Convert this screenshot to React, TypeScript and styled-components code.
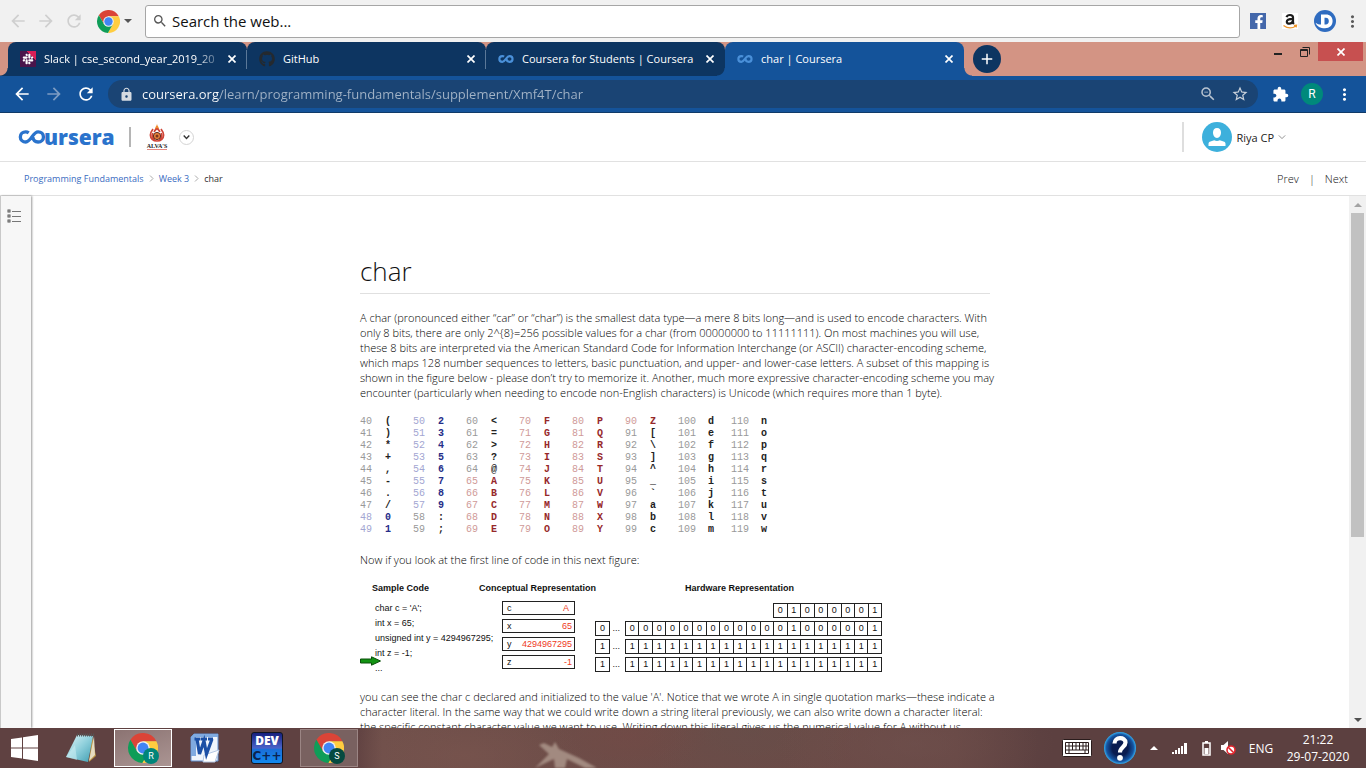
import React from "react";
import styled, { createGlobalStyle, css } from "styled-components";
import {
  MdAdd,
  MdArrowBack,
  MdArrowForward,
  MdExtension,
  MdLock,
  MdMoreVert,
  MdRefresh,
  MdSearch,
  MdStarBorder,
  MdZoomOut,
} from "react-icons/md";
import { FaFacebookF, FaGithub, FaSlack } from "react-icons/fa";

const uiFont = `"Open Sans", "Noto Sans", sans-serif`;
const figureFont = `"Liberation Sans", Arial, sans-serif`;
const blue = "#14539a";
const navy = "#0d3561";
const clay = "#d39484";

const GlobalStyle = createGlobalStyle`
  *, *::before, *::after { box-sizing: border-box; }
  body { margin: 0; background: #fff; font-family: ${uiFont}; }
  button, input { font-family: inherit; }
  button { padding: 0; border: 0; background: none; color: inherit; }
  svg { display: block; flex: none; }
`;

const Screen = styled.div`
  display: flex;
  flex-direction: column;
  height: 100vh;
  overflow: hidden;
`;

/* ---------- search bar ---------- */

const SearchBar = styled.div`
  display: flex;
  align-items: center;
  flex: none;
  height: 42px;
  padding: 0 4px;
  background: #f1f1f1;
  color: #5a5a5a;
`;

const IconButton = styled.button<{ $w: number; $color?: string }>`
  display: flex;
  align-items: center;
  justify-content: center;
  flex: none;
  gap: 4px;
  width: ${(p) => p.$w}px;
  color: ${(p) => p.$color ?? "inherit"};
`;

const SearchField = styled.label`
  display: flex;
  align-items: center;
  flex: 1;
  gap: 4px;
  height: 33px;
  margin: 0 4px;
  padding: 0 6px;
  border: 1px solid #a6a6a6;
  border-radius: 3px;
  background: #fff;
  color: #555;
`;

const SearchInput = styled.input`
  flex: 1;
  min-width: 0;
  padding: 0;
  border: 0;
  outline: 0;
  font-size: 15px;
  &::placeholder {
    color: #111;
    opacity: 1;
  }
`;

const FacebookTile = styled.span`
  display: flex;
  align-items: flex-end;
  justify-content: flex-end;
  width: 16px;
  height: 16px;
  background: #4468ab;
  color: #fff;
`;

const AmazonTile = styled.span`
  display: block;
  background: #fff;
`;

/* ---------- browser tabs ---------- */

const TabStrip = styled.div`
  display: flex;
  flex: none;
  height: 34px;
  padding-left: 8px;
  background: ${clay};
`;

const Tab = styled.div<{ $active?: boolean; $divided?: boolean }>`
  position: relative;
  display: flex;
  align-items: center;
  flex: 0 1 239px;
  min-width: 0;
  padding: 0 7px 0 12px;
  border-radius: 8px 8px 0 0;
  background: ${(p) => (p.$active ? blue : navy)};
  color: #fff;
  ${(p) =>
    p.$divided &&
    css`
      &::after {
        content: "";
        position: absolute;
        right: 0;
        top: 8px;
        width: 1px;
        height: 19px;
        background: #5b7898;
      }
    `}
  ${(p) =>
    p.$active &&
    css`
      &::before,
      &::after {
        content: "";
        position: absolute;
        bottom: 0;
        width: 8px;
        height: 8px;
      }
      &::before {
        left: -8px;
        background: radial-gradient(circle at 0 0, ${navy} 7px, ${blue} 8px);
      }
      &::after {
        right: -8px;
        background: radial-gradient(circle at 100% 0, ${clay} 7px, ${blue} 8px);
      }
    `}
`;

const FirstTab = styled(Tab)`
  &::before {
    content: "";
    position: absolute;
    left: -8px;
    bottom: 0;
    width: 8px;
    height: 8px;
    background: radial-gradient(circle at 0 0, ${clay} 7px, ${navy} 8px);
  }
`;

const TabLink = styled.a`
  display: flex;
  align-items: center;
  flex: 1;
  gap: 8px;
  min-width: 0;
  color: inherit;
  text-decoration: none;
`;

const TabTitle = styled.span<{ $fade?: boolean }>`
  flex: 1;
  font-size: 11px;
  line-height: 16px;
  white-space: nowrap;
  ${(p) =>
    p.$fade &&
    css`
      mask-image: linear-gradient(90deg, #000 calc(100% - 28px), transparent);
    `}
`;

const SlackTile = styled.span`
  display: flex;
  align-items: center;
  justify-content: center;
  width: 16px;
  height: 16px;
  background: linear-gradient(225deg, #d91f57 30%, #4a154b 31%);
  color: #fff;
`;

const NewTab = styled.button`
  display: flex;
  align-items: center;
  justify-content: center;
  flex: none;
  align-self: center;
  width: 28px;
  height: 28px;
  margin-left: 9px;
  border-radius: 50%;
  background: ${navy};
  color: #fff;
`;

const WindowControls = styled.div`
  display: flex;
  align-items: flex-start;
  margin-left: auto;
  padding-right: 3px;
`;

const WindowButton = styled.button<{ $close?: boolean }>`
  display: flex;
  align-items: center;
  justify-content: center;
  width: ${(p) => (p.$close ? 45 : 27)}px;
  height: 19px;
  background: ${(p) => (p.$close ? "#c75050" : "transparent")};
  color: ${(p) => (p.$close ? "#fff" : "#222")};
`;

/* ---------- address bar ---------- */

const AddressBar = styled.div`
  display: flex;
  align-items: center;
  flex: none;
  height: 37px;
  padding: 0 6px;
  border-bottom: 1px solid #103a68;
  background: ${blue};
  color: #fff;
`;

const Omnibox = styled.div`
  display: flex;
  align-items: center;
  flex: 1;
  height: 28px;
  margin: 0 6px;
  padding: 0 2px 0 11px;
  border-radius: 14px;
  background: #1a4474;
  color: #d5dbe2;
`;

const UrlInput = styled.input`
  flex: 1;
  min-width: 0;
  margin-left: 8px;
  padding: 0;
  border: 0;
  outline: 0;
  font-size: 13px;
  background: linear-gradient(90deg, #fff 77px, #a3b4c7 77px);
  background-clip: text;
  -webkit-background-clip: text;
  color: transparent;
`;

const ProfileBadge = styled.span`
  display: flex;
  align-items: center;
  justify-content: center;
  width: 22px;
  height: 22px;
  border-radius: 50%;
  background: #00897b;
  color: #fff;
  font: 12px Roboto, sans-serif;
`;

/* ---------- course site ---------- */

const SiteHeader = styled.header`
  display: flex;
  align-items: center;
  justify-content: space-between;
  flex: none;
  height: 49px;
  padding: 0 80px 0 18px;
  border-bottom: 1px solid #e1e1e1;
`;

const HeaderGroup = styled.div`
  display: flex;
  align-items: center;
`;

const BrandLink = styled.a`
  display: flex;
  align-items: center;
  width: 96px;
  margin-right: 15px;
  color: #2a73cc;
  text-decoration: none;
`;

const BrandName = styled.span`
  margin-left: -2px;
  font: 800 21px/24px "Open Sans", sans-serif;
`;

const HeaderRule = styled.span<{ $h: number; $color: string }>`
  width: 2px;
  height: ${(p) => p.$h}px;
  background: ${(p) => p.$color};
`;

const SchoolLink = styled.a`
  display: flex;
  flex-direction: column;
  align-items: center;
  width: 22px;
  margin: 0 11px 0 15px;
  color: #222;
  text-decoration: none;
`;

const SchoolName = styled.span`
  border-bottom: 1px solid #e58a82;
  font: bold 6px/6px "Liberation Serif", serif;
`;

const RoundButton = styled.button`
  display: flex;
  align-items: center;
  justify-content: center;
  width: 15px;
  height: 15px;
  border: 1px solid #d4d4d4;
  border-radius: 50%;
  color: #333;
`;

const UserButton = styled.button`
  display: flex;
  align-items: center;
  gap: 4px;
  margin-left: 18px;
  color: #222;
  font-size: 11px;
`;

const CrumbBar = styled.div`
  display: flex;
  align-items: center;
  justify-content: space-between;
  flex: none;
  height: 34px;
  padding: 0 18px 0 24px;
  border-bottom: 1px solid #e1e1e1;
  color: #333;
  font-size: 9px;
`;

const Crumbs = styled.nav`
  display: flex;
  align-items: center;
  gap: 5px;
`;

const CrumbLink = styled.a`
  color: #3a6cbf;
  text-decoration: none;
`;

const Pager = styled.nav`
  display: flex;
  gap: 10px;
  font-size: 11px;
  font-weight: 300;
`;

const PagerLink = styled.a`
  color: #111;
  text-decoration: none;
`;

const Workspace = styled.div`
  display: flex;
  flex: 1;
  min-height: 0;
`;

const SideRail = styled.aside`
  flex: none;
  width: 31px;
  padding: 13px 0 0 6px;
  border-left: 1px solid #c9c9c9;
  background: #f7f7f7;
  box-shadow: 1px 0 2px rgba(0, 0, 0, 0.4);
`;

const Reader = styled.main`
  flex: 1;
  min-width: 0;
  overflow: hidden;
  padding: 58px 30px 0 0;
`;

const Article = styled.article`
  width: 100%;
  max-width: 630px;
  margin: 0 auto;
`;

const Title = styled.h1`
  margin: 0 0 16px;
  padding-bottom: 5px;
  border-bottom: 1px solid #e0e0e0;
  color: #111;
  font-size: 26px;
  font-weight: 300;
  line-height: 34px;
`;

const Paragraph = styled.p`
  margin: 0;
  color: #000;
  font-size: 11px;
  font-weight: 300;
  line-height: 15px;
  white-space: nowrap;
`;

const AsciiTable = styled.table`
  margin: 16px 0;
  table-layout: fixed;
  border-collapse: collapse;
  width: 424px;
  font: 10px/12px "Liberation Mono", monospace;
`;

const tones = {
  plain: ["#999", "#222"],
  digit: ["#a3a6d2", "#252d88"],
  upper: ["#cf9a98", "#96282a"],
};

type Tone = keyof typeof tones;

const Code = styled.td<{ $tone: Tone }>`
  padding: 0;
  height: 12px;
  color: ${(p) => tones[p.$tone][0]};
`;

const Glyph = styled.td<{ $tone: Tone }>`
  padding: 0 0 0 1px;
  height: 12px;
  color: ${(p) => tones[p.$tone][1]};
  font-weight: bold;
`;

/* ---------- memory figure ---------- */

const Figure = styled.figure`
  margin: 14px 0 13px;
  color: #111;
  font: 9px/14px ${figureFont};
`;

const FigureHeads = styled.div`
  display: grid;
  grid-template-columns: 107px 206px auto;
  padding-left: 12px;
  font-weight: bold;
`;

const FigureBody = styled.div`
  display: flex;
  align-items: flex-start;
  margin-top: 6px;
`;

const SampleCode = styled.div`
  position: relative;
  width: 142px;
  padding-left: 15px;
  line-height: 15px;
  white-space: nowrap;
`;

const GreenArrow = styled.svg`
  position: absolute;
  left: 0;
  bottom: 10px;
`;

const VariableList = styled.div`
  display: flex;
  flex-direction: column;
  gap: 4px;
  width: 73px;
`;

const Variable = styled.div`
  display: flex;
  align-items: center;
  justify-content: space-between;
  height: 14px;
  padding: 0 1px 0 4px;
  border: 1px solid #222;
`;

const Value = styled.span<{ $inset?: boolean }>`
  padding-right: ${(p) => (p.$inset ? 4 : 1)}px;
  color: #ee3a24;
`;

const BitRows = styled.div`
  display: flex;
  flex-direction: column;
  gap: 3px;
  width: 287px;
  margin-left: 20px;
  padding-top: 2px;
`;

const BitRow = styled.div`
  display: flex;
  justify-content: space-between;
  height: 15px;
`;

const Bits = styled.div<{ $w: number }>`
  display: flex;
  width: ${(p) => p.$w}px;
  margin-left: auto;
  border: 1px solid #222;
  & > span {
    flex: 1;
    line-height: 13px;
    text-align: center;
  }
  & > span + span {
    border-left: 1px solid #222;
  }
`;

const LeadBit = styled.span`
  width: 15px;
  border: 1px solid #222;
  line-height: 13px;
  text-align: center;
`;

const Ellipsis = styled.span`
  margin: 0 auto;
`;

/* ---------- scroll bar ---------- */

const ScrollBar = styled.div`
  display: flex;
  flex-direction: column;
  align-items: center;
  flex: none;
  width: 17px;
  background: #f1f1f1;
`;

const ScrollEnd = styled.button`
  display: flex;
  align-items: center;
  justify-content: center;
  width: 17px;
  height: 17px;
`;

const ScrollTrack = styled.div`
  flex: 1;
  height: 0;
`;

const ScrollThumb = styled.div`
  width: 13px;
  height: 65%;
  background: #c1c1c1;
`;

/* ---------- task bar ---------- */

const TaskBar = styled.footer`
  position: relative;
  display: flex;
  align-items: center;
  flex: none;
  height: 40px;
  padding-right: 15px;
  background: radial-gradient(ellipse 80px 40px at 46% 20%, #74494580, transparent),
    radial-gradient(ellipse 120px 50px at 34% 70%, #7d575080, transparent),
    radial-gradient(ellipse 140px 60px at 67% 40%, #71535080, transparent),
    radial-gradient(ellipse 110px 60px at 55% 10%, #64504b80, transparent),
    linear-gradient(90deg, #5f4141 0, #5f4141 26%, #70504b 28%, #6e4e49 34%, #6b4a46 60%, #674744 70%, #5c4040 76%, #5c4040 100%);
  color: #fff;
`;

const Starfish = styled.svg`
  position: absolute;
  left: 39%;
  bottom: 0;
  filter: blur(1px);
`;

const TaskList = styled.div`
  display: flex;
  align-items: center;
  gap: 4px;
  flex: 1;
`;

const StartButton = styled.button`
  display: flex;
  justify-content: flex-end;
  width: 48px;
  padding-right: 10px;
`;

const TaskButton = styled.button<{ $state?: "front" | "open" }>`
  position: relative;
  display: flex;
  align-items: center;
  justify-content: center;
  width: 58px;
  height: 38px;
  border: 1px solid
    ${(p) => (p.$state === "front" ? "#fff" : p.$state === "open" ? "#9b8584" : "transparent")};
  background: ${(p) =>
    p.$state === "front"
      ? "linear-gradient(160deg, #8b7372, #ab9593)"
      : p.$state === "open"
        ? "#796160"
        : "transparent"};
`;

const Initial = styled.span<{ $color: string }>`
  position: absolute;
  right: 12px;
  bottom: 2px;
  width: 16px;
  height: 16px;
  border-radius: 50%;
  background: ${(p) => p.$color};
  font: 9px/16px Roboto, sans-serif;
  text-align: center;
`;

const DevTile = styled.span`
  display: flex;
  flex-direction: column;
  align-items: center;
  width: 32px;
  height: 32px;
  border: 1px solid #101522;
  border-radius: 3px;
  background: linear-gradient(#16207e 0, #4a63c9 50%, #1a6fd8 55%, #1289ef);
`;

const DevName = styled.span`
  font: 800 12px/16px "Open Sans", sans-serif;
`;

const DevCpp = styled.span`
  color: #0b2350;
  font: bold 12px/14px "DejaVu Sans", sans-serif;
`;

const TrayText = styled.button<{ $w: number }>`
  width: ${(p) => p.$w}px;
  font-size: 12px;
  line-height: 17px;
  text-align: center;
  white-space: nowrap;
`;

/* ---------- drawings ---------- */

const ChromeLogo = ({ size }: { size: number }) => (
  <svg width={size} height={size} viewBox="2 2 44 44">
    <path fill="#db4437" d="M43.6 14H24L15.34 29 5.54 12.03A22 22 0 0 1 43.6 14Z" />
    <path fill="#ffcd40" d="M43.6 14A22 22 0 0 1 22.86 45.97L32.66 29 24 14Z" />
    <path fill="#0f9d58" d="M22.86 45.97A22 22 0 0 1 5.54 12.03L15.34 29H32.66Z" />
    <circle cx="24" cy="24" r="10" fill="#f1f1f1" />
    <circle cx="24" cy="24" r="8" fill="#4285f4" />
  </svg>
);

const CourseraMark = ({ width, color, weight }: { width: number; color: string; weight: number }) => (
  <svg width={width} height={Math.round(width / 2)} viewBox="0 0 29 15" fill="none" stroke={color} strokeWidth={weight}>
    <path d="M11 3C10 2.300 9 2 7.800 2 4.600 2 2 4.400 2 7.400s2.600 5.400 5.800 5.400C13.400 12.800 15.400 2 21 2c3.300 0 5.800 2.400 5.800 5.400s-2.500 5.400-5.800 5.400c-3.300 0-5.200-2.200-5.600-5" />
  </svg>
);

const AlvaEmblem = () => (
  <svg width="18" height="19" viewBox="0 0 18 19">
    <path d="M9 0c-.4 2.200-2 3-2 5h4c0-2-1.600-2.800-2-5z" fill="#f08a2c" />
    <path
      d="M9 4.500c-1 1-2.500 1.500-2.700 3.500M9 4.500c1 1 2.500 1.500 2.700 3.500M5 5C3.500 7 2.300 8.500 2.400 11c0 3.500 2.600 6 6.600 6s6.600-2.500 6.600-6c.1-2.500-1.100-4-2.600-6M4.800 9c-1 3 .2 5.500 2.200 6.500M13.200 9c1 3-.2 5.500-2.200 6.500"
      fill="none"
      stroke="#cf4436"
      strokeWidth="1.700"
    />
    <circle cx="9" cy="12" r="3.600" fill="#e8823a" stroke="#5b2a20" />
    <circle cx="9" cy="12" r="1.500" fill="#7a3420" />
  </svg>
);

const DownChevron = ({ w, color, weight }: { w: number; color: string; weight: number }) => (
  <svg width={w} height="6" viewBox="0 0 10 6" fill="none" stroke={color} strokeWidth={weight}>
    <path d="M1 1l4 4 4-4" />
  </svg>
);

const Crumb = () => (
  <svg width="5" height="7" viewBox="0 0 5 7" fill="none" stroke="#aaa">
    <path d="M1 .5l3 3-3 3" />
  </svg>
);

const Avatar = () => (
  <svg width="30" height="30" viewBox="0 0 30 30">
    <circle cx="15" cy="15" r="15" fill="#3db0dc" />
    <path d="M15 6c2.600 0 4 2 4 4.600 0 2.800-1.600 5.400-4 5.400s-4-2.600-4-5.400C11 8 12.400 6 15 6zM6.500 24v-2.200c0-1.200.8-1.900 2-2.300l3.700-1.200c1.800.9 3.800.9 5.600 0l3.700 1.200c1.200.4 2 1.100 2 2.300V24z" fill="#fff" />
  </svg>
);

const OutlineIcon = () => (
  <svg width="14" height="14" viewBox="0 0 14 14" fill="none" stroke="#555">
    {[2, 7, 12].map((y) => (
      <g key={y}>
        <rect x="1" y={y - 1} width="2" height="2" />
        <path d={`M5 ${y}.5h9`} stroke="#777" />
      </g>
    ))}
  </svg>
);

const Triangle = ({ up, color }: { up?: boolean; color: string }) => (
  <svg width="8" height="4" viewBox="0 0 8 4">
    <path d={up ? "M0 4l4-4 4 4z" : "M0 0h8L4 4z"} fill={color} />
  </svg>
);

const Cross = () => (
  <svg width="8" height="8" viewBox="0 0 8 8" stroke="currentColor" strokeWidth="1.700">
    <path d="M.5 .5l7 7M7.500 .5l-7 7" />
  </svg>
);

const AmazonMark = () => (
  <svg width="16" height="16" viewBox="0 0 16 16" fill="none">
    <path
      d="M4.500 4.200C5 2.600 6.300 2 8 2c2 0 3 .8 3 2.600V9c0 .8.200 1.300.9 2M11 5.800C7 5.800 4.800 6.500 4.800 8.700c0 2.800 4.800 2.800 6.200-.7"
      stroke="#1c1c1c"
      strokeWidth="2.200"
    />
    <path d="M1.500 12.500c4 3 9 2.800 12.500.5M12 12.500l2.500-.2-.4 2" stroke="#f0962a" strokeWidth="1.300" />
  </svg>
);

const DBadge = () => (
  <svg width="22" height="22" viewBox="0 0 22 22">
    <circle cx="11" cy="11" r="11" fill="#2f6cc0" />
    <path
      d="M7 4.500h5c4 0 6.600 2.600 6.600 6.600 0 4.400-3 7.200-7.600 7.200-4.600 0-8.200-2-9.400-5.600C3 14 5 14.600 7 14.600z"
      fill="#fff"
    />
    <path d="M10.500 7.800h1.300c1.900 0 3 1.200 3 3.300s-1.100 3.500-3 3.500h-1.300z" fill="#2f6cc0" />
  </svg>
);

const WindowsLogo = () => (
  <svg width="27" height="26" viewBox="0 0 27 26" fill="#fff">
    <path d="M0 4l11-1.600V12.400H0zM12 2.200L27 0v12.400H12zM0 13.400h11v10L0 21.900zM12 13.400h15V26l-15-2.300z" />
  </svg>
);

const NotepadIcon = () => (
  <svg width="32" height="30" viewBox="0 0 32 30">
    <defs>
      <linearGradient id="note" x1="0" y1="0" x2="1" y2="1">
        <stop offset="0" stopColor="#e2f5f8" />
        <stop offset=".5" stopColor="#8fd0dc" />
        <stop offset="1" stopColor="#3f9db1" />
      </linearGradient>
    </defs>
    <path d="M27 3l4 20-7 6z" fill="#b7913f" />
    <path d="M29 3l1 19-6 6z" fill="#e6dcc0" />
    <path d="M12 2l16 1-5 26L1 24z" fill="url(#note)" />
    <path d="M1 24l9-12 2 15z" fill="#d4f1f5" opacity=".5" />
    <path d="M12 2h17" stroke="#555" strokeWidth="3" strokeDasharray="1 1" />
  </svg>
);

const WordIcon = () => (
  <svg width="30" height="30" viewBox="0 0 30 30">
    <path d="M4 1h24v27H1V4z" fill="#eef4fb" stroke="#5f8fd0" />
    <path d="M1 4l3-3h24v3H6v19H1z" fill="#7faae0" />
    <path d="M14 22l15-5-4 12H13z" fill="#fff" stroke="#b5c8e4" />
    <path d="M4.500 6h6M11 6h6M18 6h5M7 6l2.500 15L14 8l2.500 13L22 6" fill="none" stroke="#1b4fa5" strokeWidth="3.200" />
  </svg>
);

const KeyboardIcon = () => (
  <svg width="30" height="18" viewBox="0 0 30 18">
    <rect x=".5" y=".5" width="29" height="17" rx="1" fill="#fff" stroke="#2a1c1c" />
    <path
      d="M3.500 3.500h23v11h-23zM3.500 7h23M3.500 11h23M7 3.500v7.500M10.500 3.500V11M14 3.500V11M17.500 3.500V11M21 3.500V11M24 3.500V11M7 11v3.500M23 11v3.500"
      fill="none"
      stroke="#2a1c1c"
    />
  </svg>
);

const HelpIcon = () => (
  <svg width="32" height="32" viewBox="0 0 32 32">
    <defs>
      <radialGradient id="help" cx=".5" cy=".5" r=".5">
        <stop offset=".5" stopColor="#0a1c50" />
        <stop offset=".85" stopColor="#1556a4" />
        <stop offset="1" stopColor="#35aef0" />
      </radialGradient>
    </defs>
    <circle cx="16" cy="16" r="16" fill="url(#help)" />
    <path d="M10.500 11.500c0-7 11-6.800 11-1 0 4.500-5.500 4.500-5.500 10" fill="none" stroke="#fff" strokeWidth="4.200" />
    <circle cx="16" cy="25.800" r="2.900" fill="#fff" />
  </svg>
);

const SignalIcon = () => (
  <svg width="16" height="12" viewBox="0 0 16 12" fill="#fff">
    <path d="M0 10h2v2H0zM3 8h2v4H3zM6 6h2v6H6zM9 4h2v8H9zM12 1h3v11h-3z" />
  </svg>
);

const BatteryIcon = () => (
  <svg width="9" height="15" viewBox="0 0 9 15">
    <path d="M3 0h3v2H3z" fill="#fff" />
    <rect x="1" y="2" width="7" height="12" fill="none" stroke="#fff" strokeWidth="1.500" />
    <path d="M2.500 7h4v6h-4z" fill="#fff" />
  </svg>
);

const MutedIcon = () => (
  <svg width="15" height="14" viewBox="0 0 15 14">
    <path d="M0 4h2.500L7 0v13L2.500 9H0z" fill="#fff" />
    <circle cx="10" cy="9" r="4" fill="#fff" stroke="#e0242c" strokeWidth="1.600" />
    <path d="M7.200 6.200l5.600 5.600" stroke="#e0242c" strokeWidth="1.600" />
  </svg>
);

/* ---------- data ---------- */

const toneOf = (code: number): Tone =>
  code >= 48 && code <= 57 ? "digit" : code >= 65 && code <= 90 ? "upper" : "plain";

const columns = [40, 50, 60, 70, 80, 90, 100, 110];
const rows = Array.from({ length: 10 }, (_, i) => i);

const sampleLines = ["char c = 'A';", "int x = 65;", "unsigned int y = 4294967295;", "int z = -1;", "..."];

const variables = [
  { name: "c", value: "A", inset: true },
  { name: "x", value: "65", inset: false },
  { name: "y", value: "4294967295", inset: false },
  { name: "z", value: "-1", inset: false },
];

const wideWords = ["0000000000001000001", "1111111111111111111", "1111111111111111111"];

const BitCells = ({ word, width }: { word: string; width: number }) => (
  <Bits $w={width}>
    {word.split("").map((bit, i) => (
      <span key={i}>{bit}</span>
    ))}
  </Bits>
);

const CloseTab = () => (
  <IconButton $w={16} aria-label="Close tab">
    <Cross />
  </IconButton>
);

export default function App() {
  return (
    <Screen>
      <GlobalStyle />

      <SearchBar>
        <IconButton $w={28} $color="#cfcfcf" aria-label="Back"><MdArrowBack size={20} /></IconButton>
        <IconButton $w={28} $color="#cfcfcf" aria-label="Forward"><MdArrowForward size={20} /></IconButton>
        <IconButton $w={28} $color="#cfcfcf" aria-label="Reload"><MdRefresh size={20} /></IconButton>
        <IconButton $w={53} aria-label="Search engine">
          <ChromeLogo size={23} />
          <Triangle color="#555" />
        </IconButton>
        <SearchField>
          <MdSearch size={16} />
          <SearchInput aria-label="Search the web" placeholder="Search the web..." />
        </SearchField>
        <IconButton $w={28} aria-label="Facebook">
          <FacebookTile><FaFacebookF size={14} /></FacebookTile>
        </IconButton>
        <IconButton $w={36} aria-label="Amazon">
          <AmazonTile><AmazonMark /></AmazonTile>
        </IconButton>
        <IconButton $w={34} aria-label="Account"><DBadge /></IconButton>
        <IconButton $w={20} aria-label="Menu"><MdMoreVert size={19} /></IconButton>
      </SearchBar>

      <TabStrip>
        <FirstTab $divided>
          <TabLink href="#slack">
            <SlackTile><FaSlack size={12} /></SlackTile>
            <TabTitle $fade>Slack | cse_second_year_2019_20</TabTitle>
          </TabLink>
          <CloseTab />
        </FirstTab>
        <Tab $divided>
          <TabLink href="#github">
            <FaGithub size={16} color="#24292e" />
            <TabTitle>GitHub</TabTitle>
          </TabLink>
          <CloseTab />
        </Tab>
        <Tab>
          <TabLink href="#students">
            <CourseraMark width={16} color="#4a90d9" weight={4} />
            <TabTitle>Coursera for Students | Coursera</TabTitle>
          </TabLink>
          <CloseTab />
        </Tab>
        <Tab $active>
          <TabLink href="#char">
            <CourseraMark width={16} color="#4a90d9" weight={4} />
            <TabTitle>char | Coursera</TabTitle>
          </TabLink>
          <CloseTab />
        </Tab>
        <NewTab aria-label="New tab"><MdAdd size={18} /></NewTab>
        <WindowControls>
          <WindowButton aria-label="Minimize">
            <svg width="8" height="8" viewBox="0 0 8 8"><path d="M0 5h8v2H0z" fill="currentColor" /></svg>
          </WindowButton>
          <WindowButton aria-label="Restore">
            <svg width="10" height="10" viewBox="0 0 10 10" fill="none" stroke="currentColor">
              <path d="M.5 2.500h7v7h-7zM.5 3.500h7M2.500 .5h7v7" />
            </svg>
          </WindowButton>
          <WindowButton $close aria-label="Close window"><Cross /></WindowButton>
        </WindowControls>
      </TabStrip>

      <AddressBar>
        <IconButton $w={32} aria-label="Back"><MdArrowBack size={20} /></IconButton>
        <IconButton $w={32} $color="#7d9cc3" aria-label="Forward"><MdArrowForward size={20} /></IconButton>
        <IconButton $w={32} aria-label="Reload"><MdRefresh size={20} /></IconButton>
        <Omnibox>
          <MdLock size={15} />
          <UrlInput
            aria-label="Address"
            defaultValue="coursera.org/learn/programming-fundamentals/supplement/Xmf4T/char"
          />
          <IconButton $w={32} $color="#b9c4d1" aria-label="Zoom"><MdZoomOut size={18} /></IconButton>
          <IconButton $w={32} $color="#c9d1da" aria-label="Bookmark"><MdStarBorder size={18} /></IconButton>
        </Omnibox>
        <IconButton $w={32} aria-label="Extensions"><MdExtension size={17} /></IconButton>
        <IconButton $w={32} aria-label="Profile"><ProfileBadge>R</ProfileBadge></IconButton>
        <IconButton $w={32} aria-label="Browser menu"><MdMoreVert size={19} /></IconButton>
      </AddressBar>

      <SiteHeader>
        <HeaderGroup>
          <BrandLink href="#home" aria-label="coursera">
            <CourseraMark width={28} color="#2a73cc" weight={3.6} />
            <BrandName>ursera</BrandName>
          </BrandLink>
          <HeaderRule $h={20} $color="#b5b5b5" />
          <SchoolLink href="#school">
            <AlvaEmblem />
            <SchoolName>ALVA'S</SchoolName>
          </SchoolLink>
          <RoundButton aria-label="Switch program"><DownChevron w={7} color="#333" weight={2} /></RoundButton>
        </HeaderGroup>
        <HeaderGroup>
          <HeaderRule $h={30} $color="#dedede" />
          <UserButton>
            <Avatar />
            Riya CP
            <DownChevron w={8} color="#777" weight={1} />
          </UserButton>
        </HeaderGroup>
      </SiteHeader>

      <CrumbBar>
        <Crumbs aria-label="Breadcrumb">
          <CrumbLink href="#course">Programming Fundamentals</CrumbLink>
          <Crumb />
          <CrumbLink href="#week3">Week 3</CrumbLink>
          <Crumb />
          <span>char</span>
        </Crumbs>
        <Pager aria-label="Lessons">
          <PagerLink href="#prev">Prev</PagerLink>
          <span>|</span>
          <PagerLink href="#next">Next</PagerLink>
        </Pager>
      </CrumbBar>

      <Workspace>
        <SideRail>
          <IconButton $w={14} aria-label="Course outline"><OutlineIcon /></IconButton>
        </SideRail>
        <Reader>
          <Article>
            <Title>char</Title>
            <Paragraph>
              A char (pronounced either “car” or “char”) is the smallest data type—a mere 8 bits long—and is used to encode characters. With<br />
              only 8 bits, there are only 2^{"{8}"}=256 possible values for a char (from 00000000 to 11111111). On most machines you will use,<br />
              these 8 bits are interpreted via the American Standard Code for Information Interchange (or ASCII) character-encoding scheme,<br />
              which maps 128 number sequences to letters, basic punctuation, and upper- and lower-case letters. A subset of this mapping is<br />
              shown in the figure below - please don’t try to memorize it. Another, much more expressive character-encoding scheme you may<br />
              encounter (particularly when needing to encode non-English characters) is Unicode (which requires more than 1 byte).
            </Paragraph>
            <AsciiTable aria-label="ASCII codes 40 to 119">
              <colgroup>
                {columns.map((c) => (
                  <React.Fragment key={c}>
                    <col width={c < 100 ? 24 : 29} />
                    <col width={c < 100 ? 29 : 24} />
                  </React.Fragment>
                ))}
              </colgroup>
              <tbody>
                {rows.map((r) => (
                  <tr key={r}>
                    {columns.map((c) => (
                      <React.Fragment key={c}>
                        <Code $tone={toneOf(c + r)}>{c + r}</Code>
                        <Glyph $tone={toneOf(c + r)}>{String.fromCharCode(c + r)}</Glyph>
                      </React.Fragment>
                    ))}
                  </tr>
                ))}
              </tbody>
            </AsciiTable>
            <Paragraph>Now if you look at the first line of code in this next figure:</Paragraph>
            <Figure>
              <FigureHeads>
                <span>Sample Code</span>
                <span>Conceptual Representation</span>
                <span>Hardware Representation</span>
              </FigureHeads>
              <FigureBody>
                <SampleCode>
                  {sampleLines.map((line) => (
                    <div key={line}>{line}</div>
                  ))}
                  <GreenArrow width="21" height="10" viewBox="0 0 21 10">
                    <path d="M.5 3h11V.8L20.500 5l-9 4.200V7H.5z" fill="#129312" stroke="#0b4f0b" />
                  </GreenArrow>
                </SampleCode>
                <VariableList>
                  {variables.map((v) => (
                    <Variable key={v.name}>
                      <span>{v.name}</span>
                      <Value $inset={v.inset}>{v.value}</Value>
                    </Variable>
                  ))}
                </VariableList>
                <BitRows>
                  <BitRow><BitCells word="01000001" width={109} /></BitRow>
                  {wideWords.map((word, i) => (
                    <BitRow key={i}>
                      <LeadBit>{word[0]}</LeadBit>
                      <Ellipsis>...</Ellipsis>
                      <BitCells word={word} width={257} />
                    </BitRow>
                  ))}
                </BitRows>
              </FigureBody>
            </Figure>
            <Paragraph>
              you can see the char c declared and initialized to the value 'A'. Notice that we wrote A in single quotation marks—these indicate a<br />
              character literal. In the same way that we could write down a string literal previously, we can also write down a character literal:<br />
              the specific constant character value we want to use. Writing down this literal gives us the numerical value for A without us
            </Paragraph>
          </Article>
        </Reader>
        <ScrollBar>
          <ScrollEnd aria-label="Scroll up"><Triangle up color="#a3a3a3" /></ScrollEnd>
          <ScrollTrack>
            <ScrollThumb />
          </ScrollTrack>
          <ScrollEnd aria-label="Scroll down"><Triangle color="#505050" /></ScrollEnd>
        </ScrollBar>
      </Workspace>

      <TaskBar>
        <Starfish width="66" height="26" viewBox="0 0 66 26">
          <path d="M6 3l5-2 8 4 3-5 4 7 20 9 18 10H52L34 17l-2 9H22l-1-9L2 26l14-14z" fill="#a28a80" />
        </Starfish>
        <TaskList>
          <StartButton aria-label="Start"><WindowsLogo /></StartButton>
          <TaskButton aria-label="Notepad"><NotepadIcon /></TaskButton>
          <TaskButton $state="front" aria-label="Chrome, profile R">
            <ChromeLogo size={30} />
            <Initial $color="#00857a">R</Initial>
          </TaskButton>
          <TaskButton aria-label="Word"><WordIcon /></TaskButton>
          <TaskButton aria-label="Dev-C++">
            <DevTile>
              <DevName>DEV</DevName>
              <DevCpp>C++</DevCpp>
            </DevTile>
          </TaskButton>
          <TaskButton $state="open" aria-label="Chrome, profile S">
            <ChromeLogo size={30} />
            <Initial $color="#054a40">S</Initial>
          </TaskButton>
        </TaskList>
        <IconButton $w={44} aria-label="Touch keyboard"><KeyboardIcon /></IconButton>
        <IconButton $w={42} aria-label="Help"><HelpIcon /></IconButton>
        <IconButton $w={26} aria-label="Hidden icons"><Triangle up color="#fff" /></IconButton>
        <IconButton $w={26} aria-label="Network"><SignalIcon /></IconButton>
        <IconButton $w={26} aria-label="Battery"><BatteryIcon /></IconButton>
        <IconButton $w={18} aria-label="Volume muted"><MutedIcon /></IconButton>
        <TrayText $w={48}>ENG</TrayText>
        <TrayText $w={66}>21:22<br />29-07-2020</TrayText>
      </TaskBar>
    </Screen>
  );
}
